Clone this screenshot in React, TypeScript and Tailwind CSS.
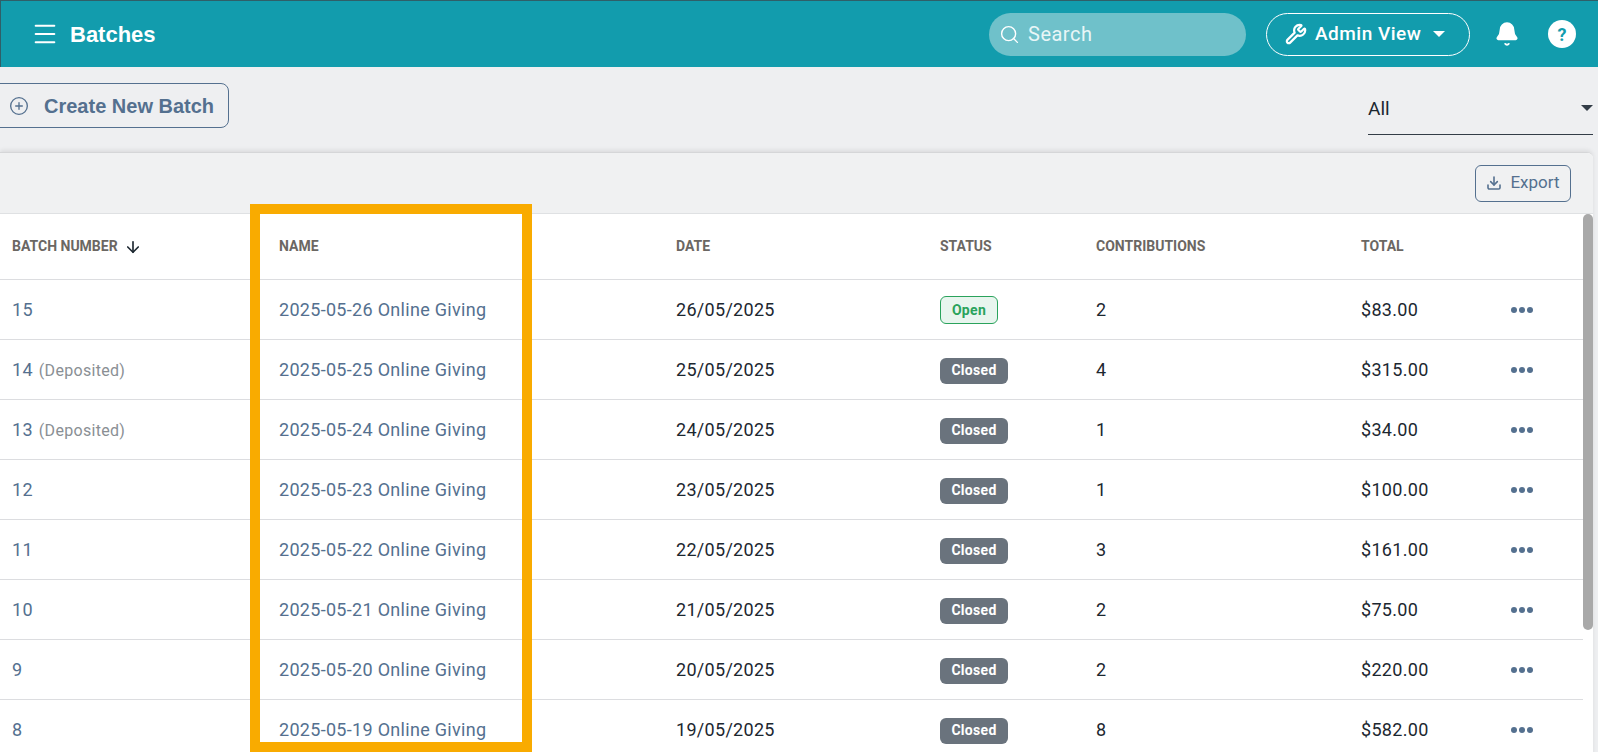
import { ArrowDown, CirclePlus, Search, Wrench, Bell, CircleHelp, Download, Menu } from "lucide-react";

const rows = [
  { num: "15", deposited: false, name: "2025-05-26 Online Giving", date: "26/05/2025", status: "Open", count: "2", total: "$83.00" },
  { num: "14", deposited: true, name: "2025-05-25 Online Giving", date: "25/05/2025", status: "Closed", count: "4", total: "$315.00" },
  { num: "13", deposited: true, name: "2025-05-24 Online Giving", date: "24/05/2025", status: "Closed", count: "1", total: "$34.00" },
  { num: "12", deposited: false, name: "2025-05-23 Online Giving", date: "23/05/2025", status: "Closed", count: "1", total: "$100.00" },
  { num: "11", deposited: false, name: "2025-05-22 Online Giving", date: "22/05/2025", status: "Closed", count: "3", total: "$161.00" },
  { num: "10", deposited: false, name: "2025-05-21 Online Giving", date: "21/05/2025", status: "Closed", count: "2", total: "$75.00" },
  { num: "9", deposited: false, name: "2025-05-20 Online Giving", date: "20/05/2025", status: "Closed", count: "2", total: "$220.00" },
  { num: "8", deposited: false, name: "2025-05-19 Online Giving", date: "19/05/2025", status: "Closed", count: "8", total: "$582.00" },
];

const gridCols = "grid grid-cols-[267px_397px_264px_156px_265px_150px_1fr] pl-3 items-center";

export default function App() {
  return (
    <div className="relative h-[752px] w-[1598px] overflow-hidden bg-[#eeeff1] font-['Roboto',sans-serif]">
      {/* Header */}
      <header className="flex h-[67px] items-center border-t border-l border-[#2f5f68] bg-[#129cad] pl-[30px] pr-[22px] text-white">
        <Menu className="h-7 w-7" strokeWidth={1.7} />
        <h1 className="ml-[11px] font-['Liberation_Sans',sans-serif] text-[22px] font-bold">Batches</h1>
        <div className="ml-auto flex h-[43px] w-[257px] items-center gap-2 rounded-full bg-[#6fc1ca] pl-2.5">
          <Search className="h-[21px] w-[21px]" strokeWidth={1.6} />
          <span className="text-[20px] tracking-[0.5px] text-[#e8f6f7]">Search</span>
        </div>
        <button className="ml-5 flex h-[43px] w-[204px] items-center gap-2 rounded-full border border-white pl-[18px]">
          <Wrench className="h-[22px] w-[22px]" strokeWidth={2.4} />
          <span className="text-[19px] font-medium tracking-[0.5px]">Admin View</span>
          <span className="ml-1 h-0 w-0 border-x-[6px] border-t-[6px] border-x-transparent border-t-white" />
        </button>
        <Bell className="ml-6 h-[26px] w-[26px] fill-white" strokeWidth={1.5} />
        <div className="ml-[28px] flex h-[28px] w-[28px] items-center justify-center rounded-full bg-white text-[18px] font-bold text-[#129cad]">?</div>
      </header>

      {/* Toolbar */}
      <div className="flex h-[85px] items-start">
        <button className="-ml-px mt-4 flex h-[45px] w-[230px] items-center gap-[15px] rounded-r-lg border border-[#54708f] pl-[9px] font-['Liberation_Sans',sans-serif] text-[20px] font-bold text-[#54708f]">
          <CirclePlus className="h-5 w-5" strokeWidth={1.6} />
          Create New Batch
        </button>
        <div className="ml-auto mr-[5px] mt-[22px] flex h-[46px] w-[225px] items-start justify-between border-b border-[#333d47] pt-1.5 text-[19px] text-[#1c2730]">
          <span>All</span>
          <span className="mt-[10px] h-0 w-0 border-x-[6px] border-t-[6px] border-x-transparent border-t-[#333d47]" />
        </div>
      </div>

      {/* Card */}
      <div className="mr-[5px] overflow-hidden rounded-tr-md border-t border-[#d5d6d8] bg-white shadow-[0_-2px_4px_rgba(0,0,0,0.08)]">
        <div className="flex h-[61px] items-center justify-end border-b border-[#dfe1e3] bg-[#f0f1f2] pr-[22px]">
          <button className="flex h-[37px] w-[96px] items-center justify-center gap-2 rounded-md border border-[#54708f] text-[17px] text-[#54708f]">
            <Download className="h-4 w-4" strokeWidth={2.4} />
            Export
          </button>
        </div>
        <div className="flex">
          <div className="min-w-0 flex-1">
            <div className={`${gridCols} h-[66px] border-b border-[#dcdde0] text-[14px] font-bold text-[#6b6763]`}>
              <div className="flex items-center gap-1.5">
                BATCH NUMBER <ArrowDown className="h-[18px] w-[18px] text-[#1c2730]" strokeWidth={2.2} />
              </div>
              <div>NAME</div>
              <div>DATE</div>
              <div>STATUS</div>
              <div>CONTRIBUTIONS</div>
              <div>TOTAL</div>
              <div />
            </div>
            {rows.map((row) => (
              <div key={row.num} className={`${gridCols} h-[60px] border-b border-[#dcdde0] text-[18px] tracking-[0.3px] text-[#1c2730]`}>
                <div className="text-[#54708f]">
                  {row.num}
                  {row.deposited ? <span className="ml-1.5 text-[16px] text-[#8a8f94]">(Deposited)</span> : null}
                </div>
                <div className="text-[#54708f]">{row.name}</div>
                <div>{row.date}</div>
                <div>
                  {row.status === "Open" ? (
                    <span className="inline-flex h-7 w-[58px] items-center justify-center rounded-md border border-[#2aa35c] bg-[#e8f5ee] text-[14px] font-bold text-[#2aa35c]">Open</span>
                  ) : (
                    <span className="inline-flex h-[26px] w-[68px] items-center justify-center rounded-md bg-[#6a737d] text-[14px] font-bold text-white">Closed</span>
                  )}
                </div>
                <div>{row.count}</div>
                <div>{row.total}</div>
                <div className="flex gap-[2px]">
                  <span className="h-[6px] w-[6px] rounded-full bg-[#54708f]" />
                  <span className="h-[6px] w-[6px] rounded-full bg-[#54708f]" />
                  <span className="h-[6px] w-[6px] rounded-full bg-[#54708f]" />
                </div>
              </div>
            ))}
          </div>
          {/* Scrollbar */}
          <div className="w-[10px] shrink-0">
            <div className="h-[416px] rounded-b-md rounded-t-md bg-[#a9a9a9]" />
          </div>
        </div>
      </div>

      {/* Highlight frame */}
      <div className="pointer-events-none absolute left-[250px] top-[204px] h-[548px] w-[282px] border-[10px] border-[#f9ab00]" />
    </div>
  );
}
